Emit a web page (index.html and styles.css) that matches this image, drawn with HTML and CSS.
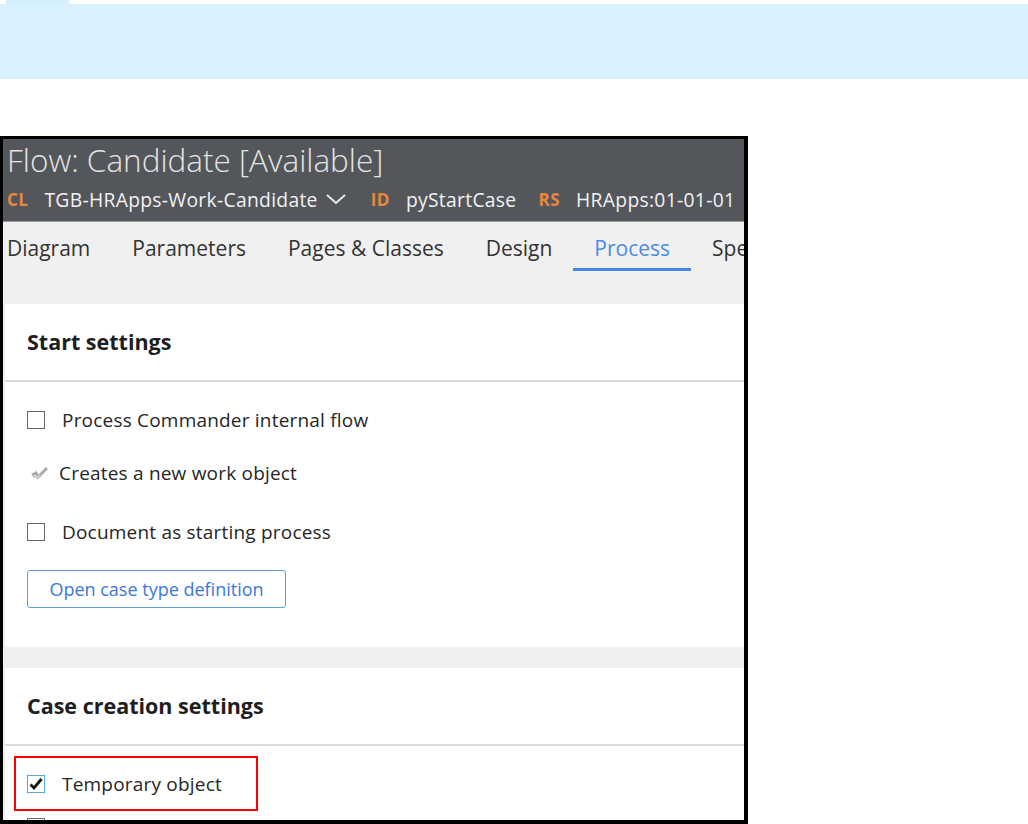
FILE: index.html
```html
<!DOCTYPE html>
<html lang="en">
<head>
  <meta charset="UTF-8" />
  <meta name="viewport" content="width=device-width, initial-scale=1.0"/>
  <title>Flow: Candidate</title>
  <link rel="stylesheet" href="styles.css">
</head>
<body>
  <div class="top-tab"></div>
  <div class="banner"></div>

  <div class="frame">
    <div class="rule-header">
      <div class="rule-title">Flow: Candidate [Available]</div>
      <div class="rule-meta">
        <span class="key">CL</span>
        <span class="val">TGB-HRApps-Work-Candidate</span>
        <svg class="chev" width="22" height="14" viewBox="0 0 22 14"><path d="M2 3 L11 11 L20 3" fill="none" stroke="#e8e8e8" stroke-width="2"/></svg>
        <span class="key">ID</span>
        <span class="val">pyStartCase</span>
        <span class="key">RS</span>
        <span class="val">HRApps:01-01-01</span>
      </div>
    </div>

    <div class="tabs">
      <div class="tab">Diagram</div>
      <div class="tab">Parameters</div>
      <div class="tab">Pages &amp; Classes</div>
      <div class="tab">Design</div>
      <div class="tab active">Process</div>
      <div class="tab">Specifications</div>
    </div>

    <div class="body">
      <div class="card">
        <div class="card-head">Start settings</div>
        <div class="card-body">
          <div class="field">
            <span class="box"></span>
            <span>Process Commander internal flow</span>
          </div>
          <div class="field readonly">
            <svg class="ro-check" width="20" height="16" viewBox="0 0 20 16">
              <path d="M2 10 L6 8 L8 12 L17 3" fill="none" stroke="#aaa" stroke-width="3"/>
              <path d="M3 12 L12 11" stroke="#ccc" stroke-width="2"/>
            </svg>
            <span>Creates a new work object</span>
          </div>
          <div class="field">
            <span class="box"></span>
            <span>Document as starting process</span>
          </div>
          <button class="btn">Open case type definition</button>
        </div>
      </div>

      <div class="card">
        <div class="card-head">Case creation settings</div>
        <div class="card-body tight">
          <div class="field highlight">
            <span class="box checked">
              <svg width="14" height="14" viewBox="0 0 14 14"><path d="M1.5 7.5 L5 11 L12.5 2" fill="none" stroke="#111" stroke-width="2.8"/></svg>
            </span>
            <span>Temporary object</span>
          </div>
          <div class="field next">
            <span class="box"></span>
          </div>
        </div>
      </div>
    </div>
  </div>
</body>
</html>
```

FILE: styles.css
```css
body {
  margin: 0;
  background: #fff;
  font-family: "Open Sans", "Liberation Sans", sans-serif;
  color: #222;
}

.top-tab {
  width: 63px;
  height: 4px;
  margin-left: 6px;
  background: #d4f0fc;
}

.banner {
  height: 75px;
  background: #d9f1fc;
}

.frame {
  margin-top: 57px;
  width: 741px;
  height: 681px;
  border-style: solid;
  border-color: #000;
  border-width: 3px 4px 4px 3px;
  overflow: hidden;
  background: #f0f0f0;
}

/* dark rule header */
.rule-header {
  height: 83px;
  background: #53565b;
  border-bottom: 1px solid #9a9a9a;
  padding-left: 4px;
  box-sizing: border-box;
  white-space: nowrap;
}

.rule-title {
  font-size: 31.5px;
  font-weight: 300;
  color: #e4e4e4;
  line-height: 42px;
}

.rule-meta {
  display: flex;
  align-items: center;
  height: 36px;
  font-size: 19.3px;
  color: #f2f2f2;
  letter-spacing: 0.3px;
}

.rule-meta > * {
  flex-shrink: 0;
}

.rule-meta .key {
  color: #e8883c;
  font-weight: 700;
  font-size: 17px;
  letter-spacing: 0.5px;
  margin-right: 16px;
}

.rule-meta .val {
  margin-right: 22px;
}

.rule-meta .chev {
  margin-left: -15px;
  margin-right: 24px;
}

/* tabs */
.tabs {
  display: flex;
  height: 82px;
  margin-left: -17px;
  white-space: nowrap;
}

.tab {
  padding: 0 21px;
  font-size: 21px;
  color: #333;
  height: 49px;
  line-height: 52px;
  box-sizing: border-box;
}

.tab.active {
  color: #4a8ce6;
  border-bottom: 3px solid #4a86e0;
}

/* cards */
.body {
  padding-left: 2px;
}

.card {
  background: #fff;
  margin-bottom: 21px;
}

.card-head {
  height: 76px;
  line-height: 76px;
  padding-left: 22px;
  font-size: 21.5px;
  font-weight: 700;
  color: #1e1e1e;
  border-bottom: 2px solid #dadada;
}

.card-body {
  padding: 20px 0 39px 22px;
}

.card-body.tight {
  padding-top: 10px;
}

.field {
  display: flex;
  align-items: center;
  height: 36px;
  margin-bottom: 17px;
  font-size: 19px;
  letter-spacing: 0.2px;
  color: #262626;
}

.box {
  width: 16px;
  height: 16px;
  border: 1px solid #666;
  margin-right: 17px;
  display: flex;
  align-items: center;
  justify-content: center;
}

.box.checked {
  border-color: #5aa6e0;
}

.readonly .ro-check {
  margin-left: 3px;
  margin-right: 9px;
}

.field.readonly {
  margin-bottom: 23px;
}

.highlight {
  margin-left: -13px;
  padding-left: 11px;
  width: 229px;
  height: 51px;
  border: 2px solid #f00;
  margin-bottom: 7px;
}

.field.next {
  align-items: flex-start;
}

.btn {
  display: block;
  font-family: inherit;
  font-size: 18px;
  color: #3b78d8;
  background: #fff;
  border: 1px solid #5e9ce0;
  border-radius: 3px;
  height: 38px;
  width: 259px;
  margin-top: 20px;
}
```
